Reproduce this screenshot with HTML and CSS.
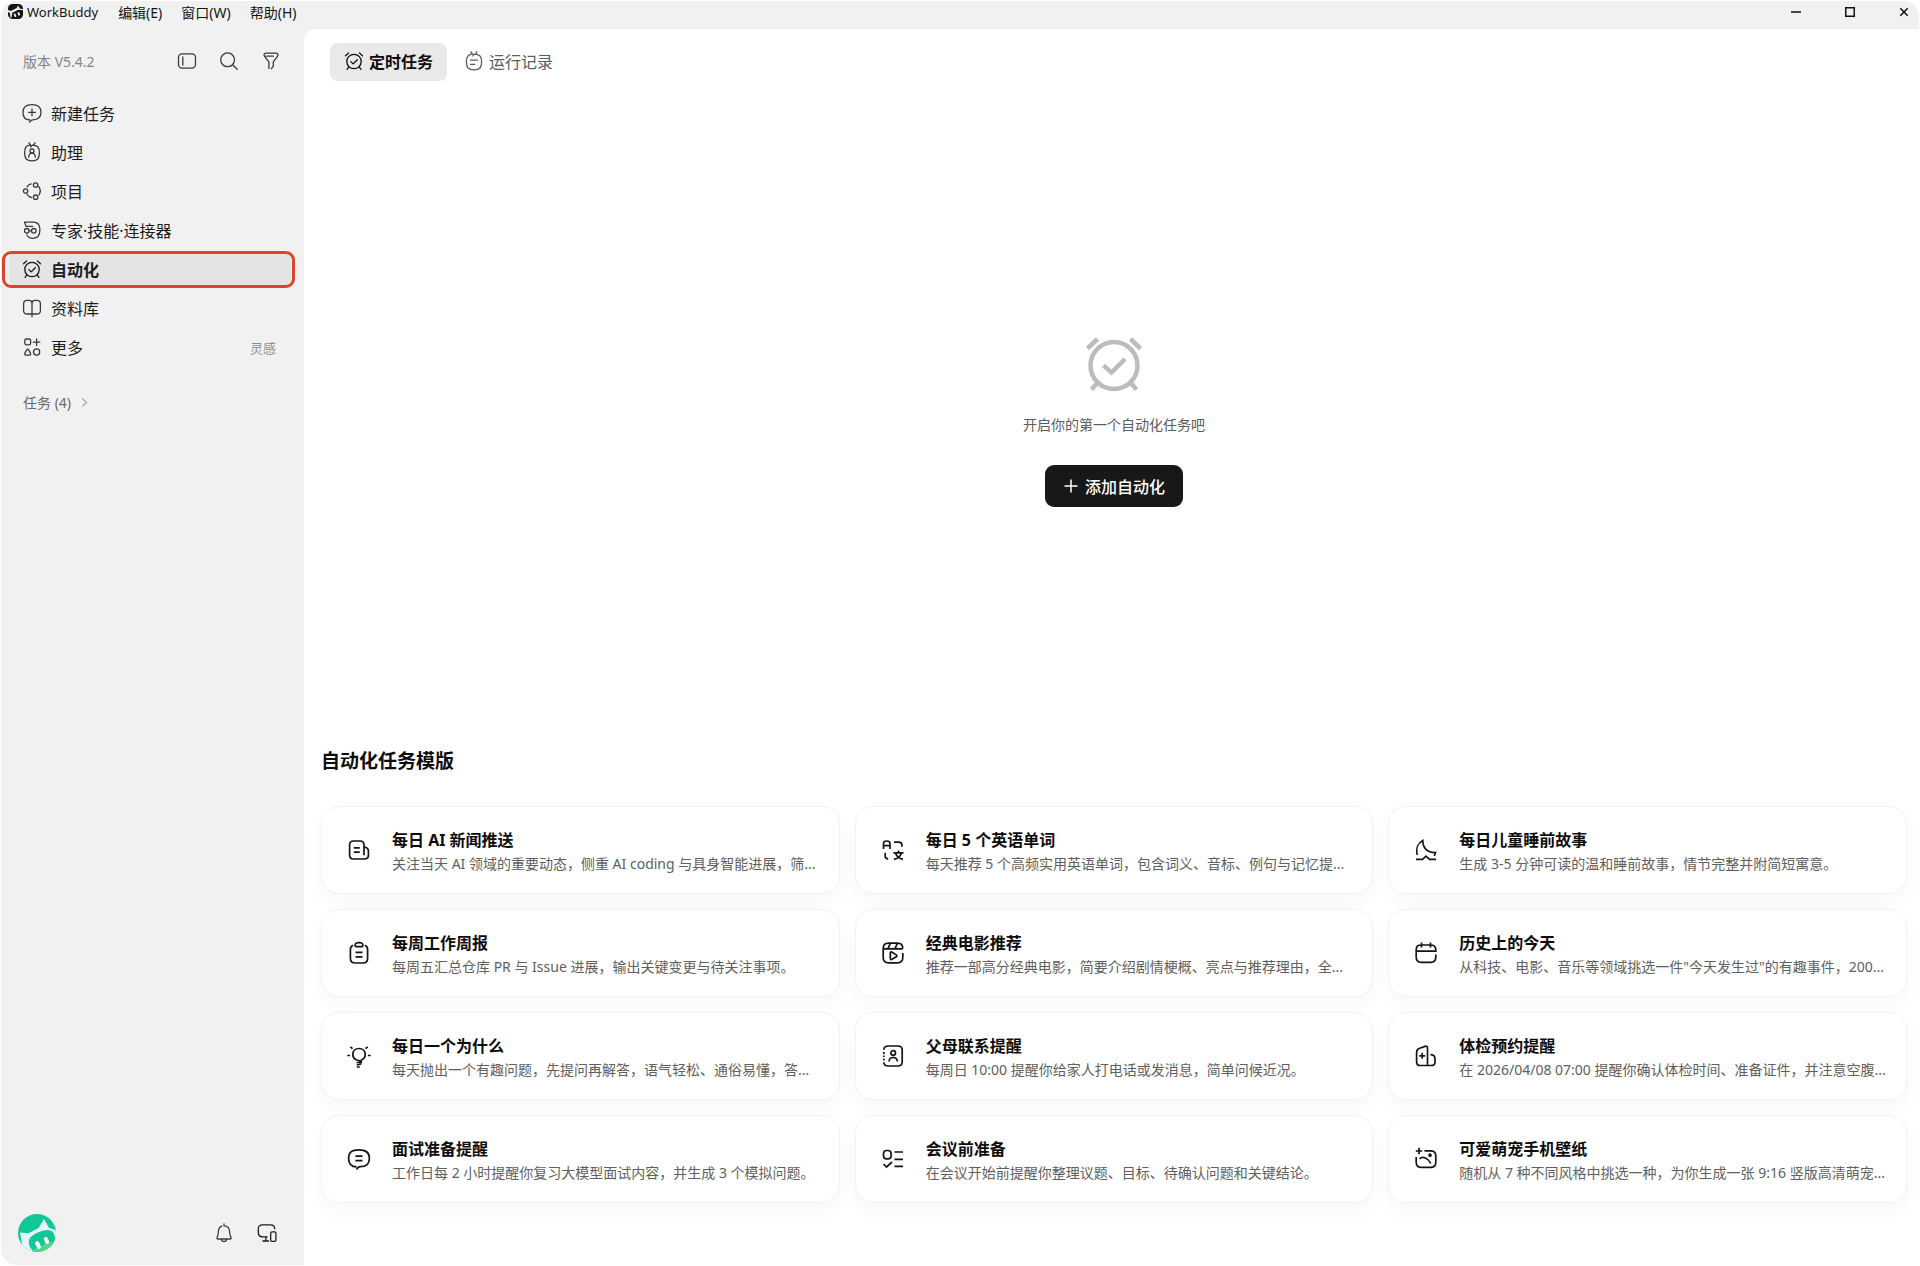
FILE: index.html
```html
<!DOCTYPE html>
<html lang="zh-CN">
<head>
<meta charset="utf-8">
<meta name="viewport" content="width=device-width, initial-scale=1">
<title>WorkBuddy</title>
<link rel="stylesheet" href="styles.css">
</head>
<body>
<svg class="defs" aria-hidden="true">
  <symbol id="i-alarm" viewBox="0 0 20 20"><circle cx="10" cy="10.5" r="7.2"/><path d="M1.6 4.8 4.6 1.9M18.4 4.8l-3-2.9M4.9 15.8l-1.9 2.5M15.1 15.8l1.9 2.5M6.8 10.6l2.4 2.3 4.1-4.2"/></symbol>
</svg>
<div class="window">
  <header class="titlebar">
    <svg class="brand-logo" viewBox="0 0 16 16" aria-hidden="true"><rect width="16" height="16" rx="5" fill="#151515"/><path d="M0 6.500 3 7.500l6-3 2-3 1.500 3.200 3.500 1v1L11 6 4.500 9.200 3.600 15 2.500 14 2 9.500 0 8.500z" fill="#f1f1f1"/><rect x="6.500" y="10" width="2" height="4" rx="1" fill="#f1f1f1" transform="rotate(-24 7.500 12)"/><rect x="10.500" y="8.500" width="2" height="4" rx="1" fill="#f1f1f1" transform="rotate(-24 11.500 10.500)"/></svg>
    <span class="brand-name">WorkBuddy</span>
    <nav class="menus" aria-label="菜单">
      <button type="button">编辑(E)</button>
      <button type="button">窗口(W)</button>
      <button type="button">帮助(H)</button>
    </nav>
    <div class="window-controls">
      <button type="button" aria-label="最小化"><svg viewBox="0 0 10 10"><path d="M0 5h10"/></svg></button>
      <button type="button" aria-label="最大化"><svg viewBox="0 0 10 10"><path d="M.75.75h8.500v8.500H.75z"/></svg></button>
      <button type="button" aria-label="关闭"><svg viewBox="0 0 10 10"><path d="M1.300 1.300l7.400 7.400M8.700 1.300 1.300 8.700"/></svg></button>
    </div>
  </header>

  <div class="body">
    <aside class="sidebar">
      <div class="side-head">
        <span class="version">版本 V5.4.2</span>
        <button type="button" class="icon-btn" aria-label="收起侧栏"><svg class="icon" viewBox="0 0 20 20"><rect x="1.500" y="2.800" width="17" height="14.400" rx="3.600"/><path d="M5.800 6v8"/></svg></button>
        <button type="button" class="icon-btn" aria-label="搜索"><svg class="icon" viewBox="0 0 20 20"><circle cx="8.600" cy="8.800" r="6.900"/><path d="M13.600 13.800l4.700 4.500"/></svg></button>
        <button type="button" class="icon-btn" aria-label="筛选"><svg class="icon" viewBox="0 0 20 20"><path d="M7.900 17.500v-6.700L3.700 5.600c-1.200-1.600-.7-3.500 1.400-3.500h9.800c2.200 0 2.600 2 1.400 3.500l-4 5.200v4.400l-1.900 2.500M4.900 5.200h7.500"/></svg></button>
      </div>

      <nav class="nav" aria-label="主导航">
        <a class="nav-item" href="#new"><svg class="icon" viewBox="0 0 20 20"><path d="M7.800 17C3.400 16.900 1 14.200 1 9.500 1 4.200 3.700 1.600 10 1.600s9 2.600 9 7.600-2.700 7.600-8.300 7.600c-1.400 0-2 1-3.200 2.400"/><path d="M10 6v6.800M6.600 9.400h6.800"/></svg>新建任务</a>
        <a class="nav-item" href="#assistant"><svg class="icon" viewBox="0 0 20 20"><path d="M7.500 3.200C4.200 3.600 2.600 5.600 2.600 10.700c0 6 1.900 8.100 7.400 8.100s7.400-2.100 7.400-8.100c0-5.100-1.600-7.500-7.400-7.500L8.500 5M7 .8l1.400 2.300M13 .8l-1.400 2.300"/><circle cx="10" cy="9" r="2"/><path d="M6.600 15.200c.3-2.400 1.400-4 3.400-4s3.100 1.600 3.400 4"/></svg>助理</a>
        <a class="nav-item" href="#projects"><svg class="icon" viewBox="0 0 20 20"><circle cx="3.600" cy="10" r="2.200"/><circle cx="13.600" cy="4" r="2.200"/><circle cx="13.600" cy="16.200" r="2.200"/><path d="M5 6C6.200 3.900 7.600 3 9.300 2.800M16.700 5.400c1.700 2.300 2 5.800.3 8.600M5.200 13.500c1.100 1.900 2.500 2.800 4.200 3"/></svg>项目</a>
        <a class="nav-item" href="#experts"><svg class="icon" viewBox="0 0 20 20"><path d="M4.200 6.400 2.600 2.200h8.800c4.600 0 6.500 2.600 6.500 7.600 0 5.600-2.200 8.500-6.800 8.500-3 0-5.200-1.200-6.200-3.300M4.200 6.400h6.500"/><circle cx="4.800" cy="10.800" r="2.300"/><circle cx="11.800" cy="10.800" r="2.300"/><path d="M7.100 10.800h2.400"/></svg>专家·技能·连接器</a>
        <a class="nav-item active" href="#automation" aria-current="page"><svg class="icon"><use href="#i-alarm"/></svg>自动化</a>
        <a class="nav-item" href="#library"><svg class="icon" viewBox="0 0 20 20"><path d="M10 18.600V5.200C10 3.300 8.900 2.400 6.800 2.400H4.900c-2 0-3.300 1.200-3.300 3.500v6.600c0 2.500 1.300 3.500 3.400 3.500h10c2.100 0 3.400-1 3.400-3.500V5.900c0-2.300-1.300-3.500-3.300-3.500h-1.900c-2.100 0-3.200.9-3.200 2.800"/></svg>资料库</a>
        <a class="nav-item" href="#more"><svg class="icon" viewBox="0 0 20 20"><rect x="2.800" y="2" width="5.800" height="5.800" rx="1.600"/><path d="M14.600 1.800v6.600M11.300 5.100h6.600M5.700 12c.6 0 3 4.200 3 5s-.4 1.200-1.200 1.200H3.900c-.8 0-1.200-.4-1.200-1.200s2.400-5 3-5z"/><circle cx="14.600" cy="15" r="3.100"/></svg>更多<span class="hint">灵感</span></a>
      </nav>

      <button type="button" class="task-group">任务 (4)<svg class="chevron" viewBox="0 0 8 12" aria-hidden="true"><path d="M1.500 1.500 6.500 6l-5 4.500"/></svg></button>

      <div class="side-foot">
        <button type="button" class="avatar" aria-label="账户"><svg viewBox="0 0 38 38"><clipPath id="av"><circle cx="19" cy="19" r="19"/></clipPath><g clip-path="url(#av)"><path fill="#11c795" d="M0 0h38v38H0z"/><path fill="#e3f5f8" d="M2 18.500 10.500 19.300 20.500 14 26 5l5 8.800 7 2.500v7l-8 15H5L3.500 27z"/><path fill="#11c795" d="M11 30c-1-6 3-9 10-12s13-3 15 2 3 18-8 19-16-3-17-9z"/><path fill="#55d58e" d="M14 36c6-1 15-9 20-8l2 6-10 6H15z"/><rect x="18" y="27" width="4" height="8" rx="2" fill="#fff" transform="rotate(-26 20 31)"/><rect x="26.500" y="23" width="4" height="7" rx="2" fill="#fff" transform="rotate(-26 28.500 26.500)"/></g></svg></button>
        <button type="button" class="icon-btn" aria-label="通知"><svg class="icon" viewBox="0 0 20 20"><path d="M10 .8v2M7.800 3.200C5.200 4 4.400 6.200 4.300 9.400c-.1 2.900-.7 3.700-1.200 4.800-.5.9-.2 1.800.8 1.800h12.200c1 0 1.300-.9.800-1.800-.6-1.100-1.100-1.900-1.200-4.800-.1-4-1.300-6.600-5.700-6.600M7.200 16.200c.4 1.700 1.300 2.400 2.800 2.400s2.400-.7 2.800-2.400"/></svg></button>
        <button type="button" class="icon-btn strong" aria-label="设备"><svg class="icon" viewBox="0 0 20 20"><path d="M10.200 13.800H5.600c-2.900 0-4.300-1.400-4.300-4.200V6c0-2.800 1.400-4.200 4.300-4.200h7.800c2.900 0 4.300 1.200 4.300 3.900M8.900 13.800v4M5.900 18h5.600"/><rect x="13.700" y="8.800" width="5.200" height="9.500" rx="1.400"/></svg></button>
      </div>
    </aside>

    <main class="main">
      <div class="tabs" role="tablist">
        <button type="button" role="tab" aria-selected="true" class="tab active"><svg class="icon"><use href="#i-alarm"/></svg>定时任务</button>
        <button type="button" role="tab" aria-selected="false" class="tab"><svg class="icon" viewBox="0 0 20 20"><path d="M7.500 3.200C4.200 3.600 2.400 5.600 2.400 10.700c0 6 1.900 8.100 7.600 8.100s7.600-2.100 7.600-8.100c0-5.100-1.800-7.500-7.600-7.500L8.800 5M7 .8l1.400 2.300M13 .8l-1.400 2.300M6.500 9.200h7M6.500 13.400h4.200"/></svg>运行记录</button>
      </div>

      <section class="empty">
        <svg class="empty-icon" viewBox="0 0 56 54" aria-hidden="true"><circle cx="28" cy="28.500" r="23.500"/><path d="M1.500 11.500 11.500 2M54.500 11.500 44.500 2M12.500 44.500l-7 8M43.500 44.500l7 8M17.500 28.500l8 7 13.500-13.500"/></svg>
        <p class="empty-text">开启你的第一个自动化任务吧</p>
        <button type="button" class="primary"><svg viewBox="0 0 14 14" aria-hidden="true"><path d="M7 .5v13M.5 7h13"/></svg>添加自动化</button>
      </section>

      <section class="templates">
        <h2>自动化任务模版</h2>
        <div class="grid">
          <button type="button" class="card"><svg class="card-icon" viewBox="0 0 24 24"><path d="M17.500 21H6.500C3.800 21 2.600 19.800 2.600 17V7c0-2.800 1.200-4 3.900-4h6.600c2.700 0 3.900 1.200 3.900 4v10.200M17 9c3 .4 4.400 1.500 4.400 4v4.500c0 2.300-1.400 3.500-4.400 3.500M6.800 9.800h6M6.800 14.200h6"/></svg><span class="card-body"><strong>每日 AI 新闻推送</strong><span class="desc">关注当天 AI 领域的重要动态，侧重 AI coding 与具身智能进展，筛...</span></span></button>
          <button type="button" class="card"><svg class="card-icon" viewBox="0 0 24 24"><path d="M2.500 11V5.500C2.500 3.700 3.500 3 5.700 3S9 3.700 9 5.500V11M2.500 7.600H9M13 4.200h4.500c2.500 0 3.500 1 3.500 3.500v1M4.200 14.800v3.700c0 1.500.8 2.300 3 2.300M17.500 12.500v2.300M12.500 14.800h10M14.500 15c1 3 3.500 5.500 7.500 6.300M20.500 15c-1 3-3.500 5.500-7.500 6.300"/></svg><span class="card-body"><strong>每日 5 个英语单词</strong><span class="desc">每天推荐 5 个高频实用英语单词，包含词义、音标、例句与记忆提...</span></span></button>
          <button type="button" class="card"><svg class="card-icon" viewBox="0 0 24 24"><path d="M3.200 17C1.500 10.500 4 5 8.800 2.500c-.2 7.300 4.500 12.300 12.700 12l-1.200 3.500M2 21.400h6.500l3.500-3.200 3.500 3.200H22"/></svg><span class="card-body"><strong>每日儿童睡前故事</strong><span class="desc">生成 3-5 分钟可读的温和睡前故事，情节完整并附简短寓意。</span></span></button>
          <button type="button" class="card"><svg class="card-icon" viewBox="0 0 24 24"><path d="M6.200 4.200C4.200 4.700 3.400 6.100 3.400 8.500v8.700c0 3.300 1.500 4.800 4.800 4.800h7.600c3.300 0 4.800-1.500 4.800-4.800V8.500c0-2.400-.8-3.800-2.800-4.300M9.800 5.700h4.400c1.200 0 1.700-.6 1.700-1.700s-.9-2.300-3.900-2.300S8.100 2.900 8.100 4s.5 1.700 1.700 1.700zM8.500 11.300h7M8.500 15.800h7"/></svg><span class="card-body"><strong>每周工作周报</strong><span class="desc">每周五汇总仓库 PR 与 Issue 进展，输出关键变更与待关注事项。</span></span></button>
          <button type="button" class="card"><svg class="card-icon" viewBox="0 0 24 24"><path d="M21.800 12v4.500c0 3.700-1.600 5.300-5.300 5.300h-9c-3.700 0-5.300-1.600-5.300-5.300v-9c0-3.700 1.600-5.300 5.300-5.300h9c3.700 0 5.300 1.600 5.300 5.300M2.200 7.800h19.600M9.300 2.400 7 7.600M16.300 2.400 14 7.600"/><path d="M9.300 12.200c0-1.100.8-1.500 1.700-1l4.300 2.700c.8.500.8 1.300 0 1.800L11 18.300c-.9.500-1.700.1-1.700-1z"/></svg><span class="card-body"><strong>经典电影推荐</strong><span class="desc">推荐一部高分经典电影，简要介绍剧情梗概、亮点与推荐理由，全...</span></span></button>
          <button type="button" class="card"><svg class="card-icon" viewBox="0 0 24 24"><path d="M21.800 13.500V16c0 3.600-1.300 5.300-5 5.300H7.200c-3.700 0-5-1.700-5-5.300V9c0-3.600 1.300-5 5-5h9.600c3.700 0 5 1.400 5 5v1.200H2.200M7.500 1.500v5M16.500 1.500v5"/></svg><span class="card-body"><strong>历史上的今天</strong><span class="desc">从科技、电影、音乐等领域挑选一件"今天发生过"的有趣事件，200...</span></span></button>
          <button type="button" class="card"><svg class="card-icon" viewBox="0 0 24 24"><path d="M9 15.800C6.800 14.700 5.800 13 5.800 10.600 5.800 7 8.300 4.500 12 4.500s6.200 2.500 6.200 6.100c0 2.800-1.600 4.700-4 5.700v2.200H9.500M9 15.800l5 1.400M9.800 21l4.400-1M9.800 23h3M.3 11.500h2.800M20.900 11.500h2.800M3.300 2.800l2.200 1.900M20.700 2.800l-2.200 1.900"/></svg><span class="card-body"><strong>每日一个为什么</strong><span class="desc">每天抛出一个有趣问题，先提问再解答，语气轻松、通俗易懂，答...</span></span></button>
          <button type="button" class="card"><svg class="card-icon" viewBox="0 0 24 24"><path d="M2.800 5.800C3 3.200 4.200 2 7 2h10c3 0 4.200 1.200 4.200 4.200v11.600c0 3-1.200 4.200-4.200 4.200H7c-2.800 0-4-1.200-4.200-3.800M2.800 8v2M2.800 11.500v1.500M2.800 14.500v2"/><circle cx="12.200" cy="9" r="2.300"/><path d="M8 17.500c.2-2.700 1.600-4 4.200-4s4 1.300 4.200 4"/></svg><span class="card-body"><strong>父母联系提醒</strong><span class="desc">每周日 10:00 提醒你给家人打电话或发消息，简单问候近况。</span></span></button>
          <button type="button" class="card"><svg class="card-icon" viewBox="0 0 24 24"><path d="M13.500 21.500H6.200c-2.600 0-3.600-1-3.600-3.600V8.500c0-2.300.8-3.500 3-4.200l5.500-1.900c1.700-.5 2.400 0 2.400 1.600v17.500h3.900c2.600 0 3.600-1 3.600-3.600v-3c0-3-1.700-4.300-4.600-4.300M8.200 8.800v6M5.200 11.800h6"/></svg><span class="card-body"><strong>体检预约提醒</strong><span class="desc">在 2026/04/08 07:00 提醒你确认体检时间、准备证件，并注意空腹...</span></span></button>
          <button type="button" class="card"><svg class="card-icon" viewBox="0 0 24 24"><path d="M9.700 19.900C4.200 19.700 1.600 17.200 1.600 11.400 1.600 5.500 4.500 2.800 12 2.800s10.400 2.700 10.400 8.400-3.200 8.500-9 8.500c-2.200 0-2.500.9-4 2.800M8.500 9.200h7M8.500 13.600h7"/></svg><span class="card-body"><strong>面试准备提醒</strong><span class="desc">工作日每 2 小时提醒你复习大模型面试内容，并生成 3 个模拟问题。</span></span></button>
          <button type="button" class="card"><svg class="card-icon" viewBox="0 0 24 24"><rect x="2.500" y="3.500" width="7.600" height="8.400" rx="3.200"/><path d="M13.500 5h8.500M13.500 12.300H22M13.500 19.300H22M2.500 17l3 3 5.500-5"/></svg><span class="card-body"><strong>会议前准备</strong><span class="desc">在会议开始前提醒你整理议题、目标、待确认问题和关键结论。</span></span></button>
          <button type="button" class="card"><svg class="card-icon" viewBox="0 0 24 24"><path d="M10.500 3.800h6c3.700 0 5.300 1.500 5.300 5v6.400c0 3.600-1.600 5.200-5.300 5.200h-9c-3.700 0-5.300-1.600-5.300-5.200V10M5 .8v6.400M1.800 4h6.400M5.500 11.800c3.500-3 8.500-.8 11.300 4.500"/><circle cx="16" cy="8.200" r="1" fill="currentColor"/></svg><span class="card-body"><strong>可爱萌宠手机壁纸</strong><span class="desc">随机从 7 种不同风格中挑选一种，为你生成一张 9:16 竖版高清萌宠...</span></span></button>
        </div>
      </section>
    </main>
  </div>
</div>
</body>
</html>
```

FILE: styles.css
```css
* {
  box-sizing: border-box;
}

body {
  margin: 0;
  padding: 1px;
  background: #fff;
  color: #141414;
  font-family: "Noto Sans", "Noto Sans CJK SC", sans-serif;
  font-size: 16px;
}

button {
  margin: 0;
  padding: 0;
  border: 0;
  background: none;
  color: inherit;
  font: inherit;
  cursor: pointer;
}

svg {
  display: block;
  flex: none;
  overflow: visible;
}

.defs {
  position: absolute;
  width: 0;
  height: 0;
}

.window {
  display: flex;
  flex-direction: column;
  min-height: calc(100vh - 2px);
  border-radius: 16px;
  background: #f1f1f1;
  overflow: hidden;
}

/* Title bar */
.titlebar {
  display: flex;
  align-items: center;
  height: 28px;
  padding: 0 10px 7px 7px;
}

.brand-logo {
  width: 15px;
  height: 15px;
}

.brand-name {
  margin-left: 4px;
  font-size: 13px;
}

.menus {
  display: flex;
  gap: 19px;
  margin-left: 20px;
  font-size: 14px;
}

.window-controls {
  display: flex;
  gap: 44px;
  margin-left: auto;
}

.window-controls svg {
  width: 10px;
  height: 10px;
  fill: none;
  stroke: #111;
  stroke-width: 1.5;
}

.body {
  display: flex;
  flex: 1;
}

/* Sidebar */
.sidebar {
  display: flex;
  flex-direction: column;
  flex: none;
  width: 303px;
  padding: 16px 13px 13px 8px;
}

.side-head {
  display: flex;
  align-items: center;
  gap: 22px;
  height: 32px;
  padding: 0 10px 0 14px;
}

.version {
  margin-right: auto;
  color: #858585;
  font-size: 14px;
}

.icon {
  width: 20px;
  height: 20px;
  fill: none;
  stroke: currentColor;
  stroke-width: 1.3;
  stroke-linecap: round;
  stroke-linejoin: round;
}

.icon-btn {
  color: #3a3a3a;
}

.icon-btn.strong {
  color: #1c1c1c;
}

.nav {
  display: flex;
  flex-direction: column;
  gap: 6px;
  margin-top: 20px;
}

.nav-item {
  position: relative;
  display: flex;
  align-items: center;
  gap: 9px;
  height: 33px;
  padding: 0 15px 1px 13px;
  border-radius: 8px;
  color: #1c1c1c;
  text-decoration: none;
}

.nav-item .icon {
  color: #3a3a3a;
}

.nav-item.active {
  background: #e4e4e4;
  font-weight: 700;
}

.nav-item.active .icon {
  color: #141414;
}

.nav-item.active::after {
  content: "";
  position: absolute;
  inset: -2px -4px -2px -7px;
  border: 3px solid #d9472b;
  border-radius: 9px;
}

.hint {
  margin-left: auto;
  color: #8e8e8e;
  font-size: 13px;
}

.task-group {
  display: flex;
  align-items: center;
  align-self: flex-start;
  gap: 10px;
  height: 24px;
  margin: 26px 0 0 14px;
  color: #6b6b6b;
  font-size: 14px;
}

.chevron {
  width: 7px;
  height: 11px;
  fill: none;
  stroke: #999;
  stroke-width: 1.2;
}

.side-foot {
  display: flex;
  align-items: center;
  gap: 23px;
  margin-top: auto;
  padding: 0 14px 0 9px;
}

.avatar {
  margin-right: auto;
}

.avatar svg {
  width: 38px;
  height: 38px;
}

/* Main panel */
.main {
  display: flex;
  flex: 1;
  flex-direction: column;
  min-width: 0;
  padding: 14px 12px 62px 17px;
  border-top-left-radius: 12px;
  background: #fff;
}

.tabs {
  display: flex;
  gap: 3px;
  padding-left: 9px;
}

.tab {
  display: flex;
  align-items: center;
  gap: 5px;
  height: 38px;
  padding: 0 14px 2px;
  border-radius: 8px;
  color: #5c5c5c;
}

.tab.active {
  background: #e9e9e9;
  color: #0c0c0c;
  font-weight: 700;
}

.empty {
  display: flex;
  flex: 1;
  flex-direction: column;
  align-items: center;
  justify-content: center;
  padding: 40px 0 24px;
}

.empty-icon {
  width: 56px;
  height: 54px;
  fill: none;
  stroke: #bcbcbc;
  stroke-width: 4.5;
}

.empty-text {
  margin: 22px 0 28px;
  color: #5c5c5c;
  font-size: 14px;
  line-height: 24px;
}

.primary {
  display: flex;
  align-items: center;
  gap: 7px;
  height: 42px;
  padding: 0 18px 1px 19px;
  border-radius: 9px;
  background: #181818;
  color: #fff;
  font-weight: 500;
}

.primary svg {
  width: 14px;
  height: 14px;
  stroke: #fff;
  stroke-width: 1.5;
}

.templates h2 {
  margin: 0 0 31px;
  color: #0c0c0c;
  font-size: 19px;
  line-height: 28px;
}

.grid {
  display: grid;
  grid-template-columns: repeat(3, minmax(0, 1fr));
  gap: 15px;
}

.card {
  display: flex;
  align-items: center;
  gap: 21px;
  height: 88px;
  padding: 0 12px 0 25px;
  border: 1px solid #f2f2f2;
  border-radius: 18px;
  background: #fff;
  box-shadow: 0 8px 20px rgba(0, 0, 0, 0.03);
  text-align: left;
}

.card-icon {
  width: 24px;
  height: 24px;
  fill: none;
  stroke: currentColor;
  stroke-width: 1.7;
}

.card-body {
  display: flex;
  flex: 1;
  flex-direction: column;
  min-width: 0;
  padding-top: 3px;
}

.card strong {
  color: #0c0c0c;
  line-height: 24px;
}

.desc {
  overflow: hidden;
  color: #606060;
  font-size: 14px;
  line-height: 24px;
  text-overflow: ellipsis;
  white-space: nowrap;
}
```
